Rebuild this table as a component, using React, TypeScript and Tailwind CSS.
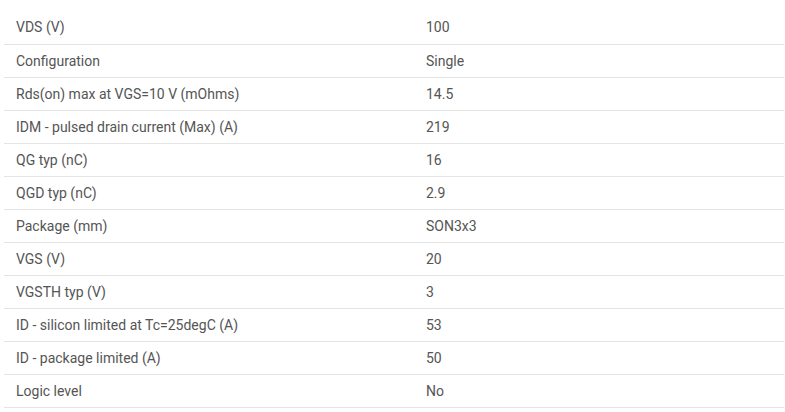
import * as React from "react";

const specs: [string, string][] = [
  ["VDS (V)", "100"],
  ["Configuration", "Single"],
  ["Rds(on) max at VGS=10 V (mOhms)", "14.5"],
  ["IDM - pulsed drain current (Max) (A)", "219"],
  ["QG typ (nC)", "16"],
  ["QGD typ (nC)", "2.9"],
  ["Package (mm)", "SON3x3"],
  ["VGS (V)", "20"],
  ["VGSTH typ (V)", "3"],
  ["ID - silicon limited at Tc=25degC (A)", "53"],
  ["ID - package limited (A)", "50"],
  ["Logic level", "No"],
];

const App = () => {
  return (
    <div className="w-[785px] h-[412px] bg-white pt-[11px] pl-[4px] pr-px font-['Roboto',sans-serif]">
      <table className="w-[780px] border-collapse text-[14px] text-[#555]">
        <tbody>
          {specs.map(([label, value]) => (
            <tr key={label} className="h-[33px] border-b border-[#e4e4e4]">
              <td className="w-[410px] pl-3 pr-2 pt-px align-middle">{label}</td>
              <td className="pl-3 pt-px align-middle">{value}</td>
            </tr>
          ))}
        </tbody>
      </table>
    </div>
  );
};

export default App;
